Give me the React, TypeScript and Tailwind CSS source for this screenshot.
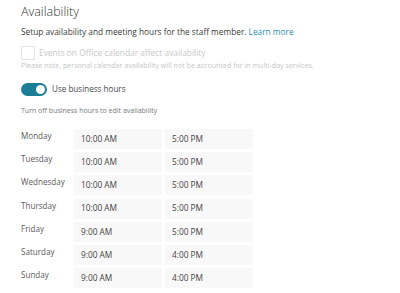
import React from 'react';

const hours = [
  { day: 'Monday', start: '10:00 AM', end: '5:00 PM' },
  { day: 'Tuesday', start: '10:00 AM', end: '5:00 PM' },
  { day: 'Wednesday', start: '10:00 AM', end: '5:00 PM' },
  { day: 'Thursday', start: '10:00 AM', end: '5:00 PM' },
  { day: 'Friday', start: '9:00 AM', end: '5:00 PM' },
  { day: 'Saturday', start: '9:00 AM', end: '4:00 PM' },
  { day: 'Sunday', start: '9:00 AM', end: '4:00 PM' },
];

const App: React.FC = () => {
  return (
    <div
      className="w-[400px] h-[293px] bg-white pl-[21px] text-[#333]"
      style={{ fontFamily: '"Open Sans", "Liberation Sans", sans-serif' }}
    >
      <h1 className="pt-[3px] text-[12.5px] font-light leading-[18px] text-[#333]">Availability</h1>
      <p className="mt-[4px] text-[8.3px] leading-[14px] text-[#3a3a3a]">
        Setup availability and meeting hours for the staff member.{' '}
        <a className="text-[#2b8db0]">Learn more</a>
      </p>

      {/* Office calendar checkbox (disabled) */}
      <div className="mt-[7px] flex items-center">
        <div className="w-[14px] h-[14px] border border-[#e3e3e3] rounded-[1px] bg-white" />
        <span className="ml-[4px] text-[8.4px] leading-[14px] text-[#c8c8c8]">
          Events on Office calendar affect availability
        </span>
      </div>
      <p className="mt-0 text-[7.1px] leading-[11px] text-[#c6c6c6]">
        Please note, personal calendar availability will not be accounted for in multi-day services.
      </p>

      {/* Business hours toggle */}
      <div className="mt-[11px] flex items-center">
        <div className="w-[26px] h-[13px] rounded-full bg-[#1b7e96] flex items-center justify-end pr-[2px]">
          <div className="w-[9px] h-[9px] rounded-full bg-white" />
        </div>
        <span className="ml-[5px] text-[8.1px] leading-[14px] text-[#4a4a4a]">Use business hours</span>
      </div>
      <p className="mt-[9px] text-[7px] leading-[11px] text-[#7a7a7a]">
        Turn off business hours to edit availability
      </p>

      {/* Hours grid */}
      <div className="mt-[13px] flex flex-col gap-[3.2px]">
        {hours.map((h) => (
          <div key={h.day} className="flex">
            <div className="w-[53px] text-[8.1px] leading-[14px] text-[#5a5a5a]">{h.day}</div>
            <div className="w-[88px] h-[20px] bg-[#f8f8f8] flex items-center pl-[7px] text-[8.3px] text-[#444]">
              {h.start}
            </div>
            <div className="ml-[3px] w-[88px] h-[20px] bg-[#f8f8f8] flex items-center pl-[7px] text-[8.3px] text-[#444]">
              {h.end}
            </div>
          </div>
        ))}
      </div>
    </div>
  );
};

export default App;
